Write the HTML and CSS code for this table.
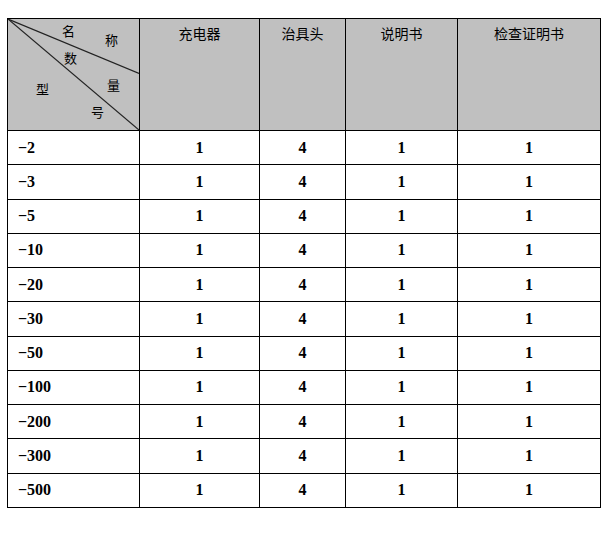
FILE: index.html
```html
<!DOCTYPE html>
<html lang="zh">
<head>
<meta charset="utf-8">
<link rel="stylesheet" href="styles.css">
</head>
<body>
<div class="page">
<table class="spec">
  <colgroup>
    <col class="c1"><col class="c2"><col class="c3"><col class="c4"><col class="c5">
  </colgroup>
  <thead>
    <tr>
      <th class="diag">
        <svg class="diag-lines" viewBox="0 0 132 112" preserveAspectRatio="none">
          <line x1="0" y1="0" x2="132" y2="55" />
          <line x1="0" y1="0" x2="132" y2="112" />
        </svg>
        <span class="lbl l-ming">名</span>
        <span class="lbl l-cheng">称</span>
        <span class="lbl l-shu">数</span>
        <span class="lbl l-liang">量</span>
        <span class="lbl l-xing">型</span>
        <span class="lbl l-hao">号</span>
      </th>
      <th>充电器</th>
      <th>治具头</th>
      <th>说明书</th>
      <th>检查证明书</th>
    </tr>
  </thead>
  <tbody>
    <tr><td class="model">−2</td><td>1</td><td>4</td><td>1</td><td>1</td></tr>
    <tr><td class="model">−3</td><td>1</td><td>4</td><td>1</td><td>1</td></tr>
    <tr><td class="model">−5</td><td>1</td><td>4</td><td>1</td><td>1</td></tr>
    <tr><td class="model">−10</td><td>1</td><td>4</td><td>1</td><td>1</td></tr>
    <tr><td class="model">−20</td><td>1</td><td>4</td><td>1</td><td>1</td></tr>
    <tr><td class="model">−30</td><td>1</td><td>4</td><td>1</td><td>1</td></tr>
    <tr><td class="model">−50</td><td>1</td><td>4</td><td>1</td><td>1</td></tr>
    <tr><td class="model">−100</td><td>1</td><td>4</td><td>1</td><td>1</td></tr>
    <tr><td class="model">−200</td><td>1</td><td>4</td><td>1</td><td>1</td></tr>
    <tr><td class="model">−300</td><td>1</td><td>4</td><td>1</td><td>1</td></tr>
    <tr><td class="model">−500</td><td>1</td><td>4</td><td>1</td><td>1</td></tr>
  </tbody>
</table>
</div>
</body>
</html>
```

FILE: styles.css
```css
html, body {
  margin: 0;
  padding: 0;
  background: #ffffff;
}

.page {
  padding: 18px 0 0 7px;
}

.spec {
  border-collapse: collapse;
  table-layout: fixed;
  width: 593px;
}

.c1 { width: 132px; }
.c2 { width: 120px; }
.c3 { width: 86px; }
.c4 { width: 112px; }
.c5 { width: 143px; }

.spec th,
.spec td {
  border: 1px solid #000;
  padding: 0;
}

.spec th {
  box-sizing: border-box;
  height: 112px;
  background: #c0c0c0;
  vertical-align: top;
  font-family: "Noto Sans CJK SC", "Noto Sans", sans-serif;
  font-weight: normal;
  font-size: 14px;
  line-height: 16px;
  color: #000;
  padding-top: 6px;
  text-align: center;
}

.spec th.diag {
  position: relative;
  padding: 0;
}

.diag-lines {
  position: absolute;
  left: 0;
  top: 0;
  width: 100%;
  height: 100%;
}

.diag-lines line {
  stroke: #222;
  stroke-width: 1.2;
}

.lbl {
  position: absolute;
  font-size: 13px;
  line-height: 13px;
}

.l-ming  { left: 54px; top: 5px; }
.l-cheng { left: 97px; top: 14px; }
.l-shu   { left: 56px; top: 32px; }
.l-liang { left: 99px; top: 59px; }
.l-xing  { left: 28px; top: 63px; }
.l-hao   { left: 83px; top: 86px; }

.spec td {
  height: 33.27px;
  text-align: center;
  vertical-align: middle;
  font-family: "Liberation Serif", "DejaVu Serif", serif;
  font-weight: bold;
  font-size: 16px;
  color: #000;
}

.spec td.model {
  text-align: left;
  padding-left: 10px;
}
```
